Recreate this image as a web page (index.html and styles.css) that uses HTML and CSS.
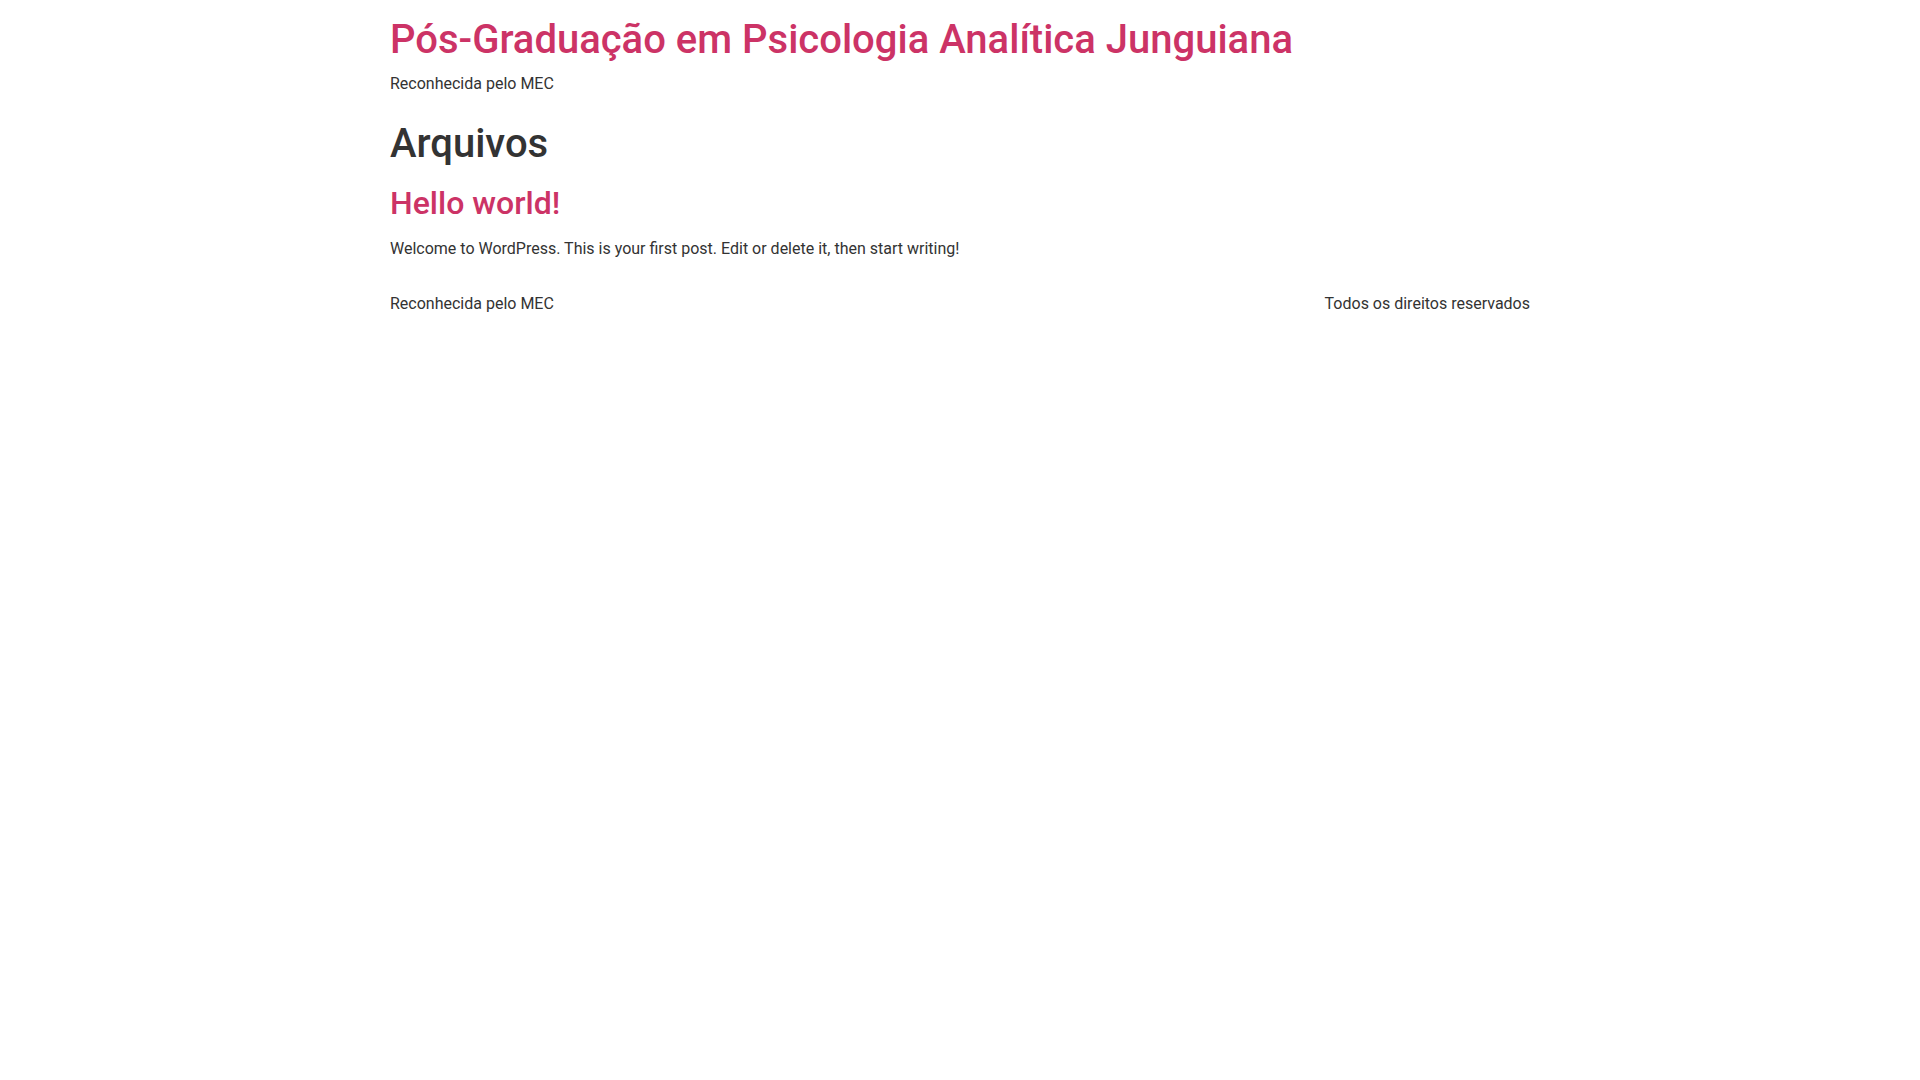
FILE: index.html
```html
<!DOCTYPE html>
<html lang="pt-BR">
<head>
<meta charset="utf-8">
<title>Arquivos – Pós-Graduação em Psicologia Analítica Junguiana</title>
<link rel="stylesheet" href="styles.css">
</head>
<body>
<header class="site-header">
  <div class="site-branding">
    <a class="site-title" href="#">Pós-Graduação em Psicologia Analítica Junguiana</a>
    <p class="site-description">Reconhecida pelo MEC</p>
  </div>
</header>
<main class="site-main">
  <header class="page-header">
    <h1 class="entry-title">Arquivos</h1>
  </header>
  <article class="post">
    <h2 class="entry-title"><a href="#">Hello world!</a></h2>
    <p>Welcome to WordPress. This is your first post. Edit or delete it, then start writing!</p>
  </article>
</main>
<footer class="site-footer">
  <p class="footer-left">Reconhecida pelo MEC</p>
  <p class="footer-right">Todos os direitos reservados</p>
</footer>
</body>
</html>
```
FILE: styles.css
```css
html, body {
  margin: 0;
  padding: 0;
  background: #fff;
}
body {
  font-family: Roboto, "Liberation Sans", sans-serif;
  font-size: 16px;
  line-height: 1.5;
  color: #333;
}
a {
  color: #c36;
  text-decoration: none;
}
.site-header,
.site-main,
.site-footer {
  max-width: 1140px;
  margin: 0 auto;
}
.site-header {
  padding: 16px 0;
}
.site-branding {
  display: flex;
  flex-direction: column;
}
.site-title {
  font-size: 40px;
  font-weight: 500;
  line-height: 1.2;
}
.site-description {
  margin: 8px 0 0;
}
.page-header .entry-title {
  font-size: 40px;
  font-weight: 500;
  line-height: 1.2;
  margin: 8px 0;
}
.post h2 {
  font-size: 32px;
  font-weight: 500;
  line-height: 1.2;
  margin: 16px 0 0;
}
.post p {
  margin: 15px 0 0;
}
.site-footer {
  display: flex;
  justify-content: space-between;
  padding: 31px 0 16px;
}
.site-footer p {
  margin: 0;
}
```
